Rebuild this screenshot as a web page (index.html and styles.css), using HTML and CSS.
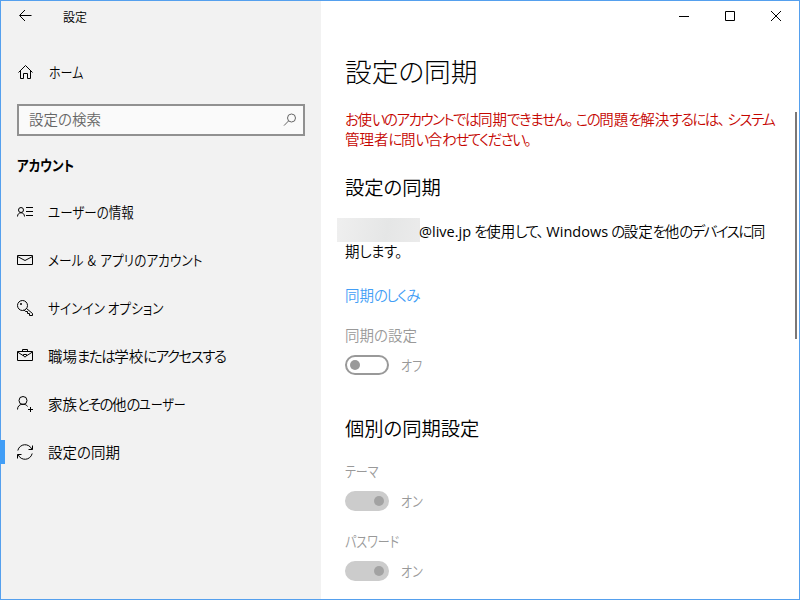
FILE: index.html
```html
<!DOCTYPE html>
<html lang="ja">
<head>
    <meta charset="UTF-8">
    <meta name="viewport" content="width=device-width, initial-scale=1.0">
    <title>設定</title>
    <link rel="stylesheet" href="styles.css">
</head>
<body>
    <div class="window">
        <aside class="sidebar">
            <div class="titlebar">
                <svg class="back" width="14" height="12" viewBox="0 0 14 12"><path d="M13.500 6.500H2M7 1L1.500 6.500l5.500 5.500"/></svg>
                <span>設定</span>
            </div>
            <a class="nav-item home">
                <svg width="16" height="16" viewBox="0 0 16 16"><path d="M1.500 8.500L8.500 1.500l7 7M3.500 7v7.500h3v-5h4v5h3V7"/></svg>
                <span class="narrow">ホーム</span>
            </a>
            <div class="search">
                <span>設定の検索</span>
                <svg width="14" height="14" viewBox="0 0 14 14"><circle cx="8.500" cy="5" r="4"/><path d="M5.600 7.900L1 12.600"/></svg>
            </div>
            <h3><span class="narrow-bold">アカウント</span></h3>
            <nav>
                <a class="nav-item">
                    <svg width="16" height="16" viewBox="0 0 16 16"><circle cx="4" cy="6" r="2.500"/><path d="M.5 12.500c0-5 7-5 7 0M9 3.500h7M9 7.500h7M9 11.500h7"/></svg>
                    <span class="narrow-info">ユーザーの情報</span>
                </a>
                <a class="nav-item">
                    <svg width="16" height="16" viewBox="0 0 16 16"><path d="M.5 3.500h15v9H.5zM.5 4.500L8 8.500l7.500-4"/></svg>
                    <span class="narrow-long"><span class="amp">メール &amp; </span>アプリのアカウント</span>
                </a>
                <a class="nav-item">
                    <svg width="16" height="16" viewBox="0 0 16 16"><path d="M9.500 8.500l6 5v2h-3v-2h-2v-2h-2l-1.500-1.700"/><circle cx="5.500" cy="5.500" r="5"/><circle class="dot" cx="4" cy="4" r="1"/></svg>
                    <span class="narrow-long">サインイン オプション</span>
                </a>
                <a class="nav-item">
                    <svg width="16" height="16" viewBox="0 0 16 16"><path d="M.5 3.500h15v9H.5zM5.500 3V1.500h5V3M.5 4l5.500 3.500M15.500 4L10 7.500M6.500 6.500h3v1.500l-1.500 1-1.500-1z"/></svg>
                    <span>職場<span class="kana">または</span>学校<span class="kana">にアクセスする</span></span>
                </a>
                <a class="nav-item">
                    <svg width="16" height="16" viewBox="0 0 16 16"><circle cx="6" cy="4.500" r="4"/><path d="M.5 13.500C.5 7 9 7 10.500 10.500M13.500 11v5M11 13.500h5"/></svg>
                    <span>家族<span class="kana">とその</span>他<span class="kana">の</span><span class="narrow">ユーザー</span></span>
                </a>
                <a class="nav-item active">
                    <svg width="16" height="16" viewBox="0 0 16 16"><path d="M.8 6.500C2.500-.5 12-1.500 15 5.500M15.500 1.500v4h-4M15.200 9.500C13.500 16.500 4 17.500 1 10.500M.5 14.500v-4h4"/></svg>
                    <span>設定の同期</span>
                </a>
            </nav>
        </aside>
        <main>
            <div class="controls">
                <svg width="10" height="10" viewBox="0 0 10 10"><path d="M0 5.500h10"/></svg>
                <svg width="10" height="10" viewBox="0 0 10 10"><path d="M.5 .5h9v9h-9z"/></svg>
                <svg width="10" height="10" viewBox="0 0 10 10"><path d="M0 0l10 10M10 0L0 10"/></svg>
            </div>
            <h1>設定の同期</h1>
            <p class="error"><span class="kana">お</span>使<span class="kana">いのアカウントでは</span>同期<span class="kana">できません。<span class="gap"></span>この</span>問題<span class="kana">を</span>解決<span class="kana">するには、<span class="gap"></span>システム</span><br>管理者<span class="kana">に</span>問<span class="kana">い</span>合<span class="kana">わせてください。</span></p>
            <h2>設定の同期</h2>
            <p class="account"><span class="masked"></span><span class="latin">@live.jp</span> <span class="kana">を</span>使用<span class="kana">して、<span class="gap"></span></span><span class="latin">Windows</span> <span class="kana">の</span>設定<span class="kana">を</span>他<span class="kana">のデバイスに</span>同<br>期<span class="end">します。</span></p>
            <a class="link">同期<span class="kana">のしくみ</span></a>
            <div class="setting">
                <label>同期の設定</label>
                <div class="toggle-row"><span class="toggle"></span><span class="narrow">オフ</span></div>
            </div>
            <h2 class="individual">個別の同期設定</h2>
            <div class="setting first">
                <label><span class="narrow">テーマ</span></label>
                <div class="toggle-row"><span class="toggle on"></span><span class="narrow">オン</span></div>
            </div>
            <div class="setting">
                <label><span class="narrow">パスワード</span></label>
                <div class="toggle-row"><span class="toggle on"></span><span class="narrow">オン</span></div>
            </div>
            <div class="scrollbar"></div>
        </main>
    </div>
</body>
</html>
```

FILE: styles.css
```css
:root {
    --accent: #429ef6;
    --frame: #55a0ee;
    --panel: #f2f2f2;
    --muted: #999;
}

* {
    margin: 0;
    padding: 0;
    box-sizing: border-box;
}

body {
    font-family: "Noto Sans CJK JP", sans-serif;
    font-size: 14.5px;
    font-weight: 350;
    line-height: 20px;
    font-feature-settings: "palt";
    color: #000;
    overflow: hidden;
}

svg {
    display: block;
    fill: none;
    stroke: #000;
    stroke-width: 1;
    flex: none;
}

.dot {
    fill: #000;
    stroke: none;
}

/* condensed kana */
.narrow,
.narrow-bold,
.narrow-info,
.narrow-long {
    display: inline-block;
    transform: scaleX(0.83);
    transform-origin: left;
}

.narrow-bold,
.narrow-info {
    transform: scaleX(0.865);
}

.narrow-long {
    transform: scaleX(0.875);
}

.amp {
    word-spacing: 1.5px;
}

.kana {
    letter-spacing: -1.5px;
}

.end {
    letter-spacing: -0.6px;
}

.gap {
    display: inline-block;
    width: 4px;
}

.window {
    display: flex;
    width: 800px;
    height: 600px;
    border: 1px solid var(--frame);
    background: #fff;
}

.sidebar {
    flex: none;
    width: 320px;
    background: var(--panel);
}

.titlebar {
    display: flex;
    align-items: center;
    gap: 31px;
    height: 31px;
    padding-left: 17px;
    font-size: 12px;
}

.back {
    margin-bottom: 3px;
}

.nav-item {
    display: flex;
    align-items: center;
    gap: 15px;
    height: 48px;
    padding-left: 16px;
    white-space: nowrap;
}

.home {
    height: 40px;
    margin-top: 20px;
    gap: 16px;
}

.search {
    display: flex;
    align-items: center;
    justify-content: space-between;
    width: 288px;
    height: 32px;
    margin: 12px 0 0 16px;
    padding: 0 6px 0 10px;
    border: 2px solid #919191;
    background: #fafafa;
    color: #666;
}

.search span {
    padding-bottom: 2px;
}

.search svg {
    stroke: #666;
}

h3 {
    margin: 19px 0 13px 16px;
    font-size: 14.5px;
    font-weight: 700;
    line-height: 20px;
}

.active {
    position: relative;
}

.active::before {
    content: "";
    position: absolute;
    left: -1px;
    top: 12px;
    width: 5px;
    height: 24px;
    background: var(--accent);
}

main {
    position: relative;
    flex: 1;
    min-width: 0;
    padding-left: 24px;
    white-space: nowrap;
}

.controls {
    display: flex;
    justify-content: flex-end;
    align-items: center;
    gap: 36px;
    height: 30px;
    padding-right: 18px;
}

h1 {
    margin-top: 20px;
    font-size: 26.7px;
    font-weight: 300;
    line-height: 40px;
}

.error {
    margin-top: 18px;
    color: #c50500;
}

h2 {
    margin-top: 23px;
    font-size: 19.3px;
    font-weight: 350;
    line-height: 30px;
}

.account {
    margin-top: 19px;
}

.masked {
    display: inline-block;
    width: 83px;
    height: 24px;
    margin: -3px -1px -1px -8px;
    vertical-align: top;
    background: linear-gradient(100deg, #efefef, #e5e6e6 60%, #ebebeb);
}

.latin {
    font-family: "Open Sans", sans-serif;
    font-weight: 400;
    line-height: 1;
}

.link {
    display: block;
    margin-top: 24px;
    color: var(--accent);
}

.setting {
    margin-top: 20px;
    color: var(--muted);
}

.setting.first {
    margin-top: 18px;
}

.setting label {
    display: block;
}

.toggle-row {
    display: flex;
    align-items: center;
    gap: 12px;
    margin-top: 10px;
}

.toggle {
    display: flex;
    align-items: center;
    width: 44px;
    height: 20px;
    padding: 0 3px;
    border: 2px solid var(--muted);
    border-radius: 10px;
}

.toggle::before {
    content: "";
    width: 10px;
    height: 10px;
    border-radius: 50%;
    background: var(--muted);
}

.toggle.on {
    justify-content: flex-end;
    border-color: #ccc;
    background: #ccc;
}

.toggle.on::before {
    background: #a3a3a3;
}

.individual {
    margin-top: 38px;
}

.scrollbar {
    position: absolute;
    top: 111px;
    right: 2px;
    width: 2px;
    height: 227px;
    background: #7a7777;
}
```
